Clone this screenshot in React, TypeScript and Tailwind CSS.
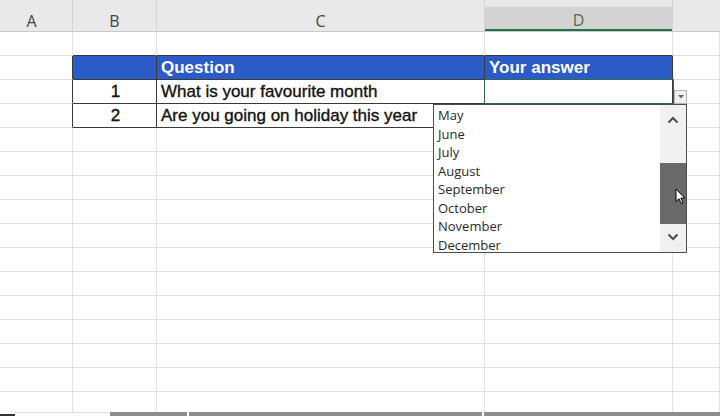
import React from 'react'

const COLS = [
  { key: 'A', w: 'w-[73px]' },
  { key: 'B', w: 'w-[84px]' },
  { key: 'C', w: 'w-[328px]' },
  { key: 'D', w: 'w-[188px]' },
  { key: 'E', w: 'flex-1' },
]

const MONTHS = ['May', 'June', 'July', 'August', 'September', 'October', 'November', 'December']

const ROW_COUNT = 16

function cellText(row: number, col: number) {
  if (row === 1 && col === 2) return 'Question'
  if (row === 1 && col === 3) return 'Your answer'
  if (row === 2 && col === 1) return '1'
  if (row === 2 && col === 2) return 'What is your favourite month'
  if (row === 3 && col === 1) return '2'
  if (row === 3 && col === 2) return 'Are you going on holiday this year'
  return ''
}

function Cell({ row, col }: { row: number; col: number }) {
  const inTable = col >= 1 && col <= 3
  const darkBottom = inTable && row >= 0 && row <= 3
  const darkRight = col >= 0 && col <= 3 && row >= 1 && row <= 3
  const isHead = row === 1 && inTable
  const text = cellText(row, col)

  return (
    <div
      className={[
        COLS[col].w,
        'h-full shrink-0 border-b border-r flex items-center overflow-hidden whitespace-nowrap text-[17px] pt-[1px]',
        darkBottom ? 'border-b-[#3a3a3a]' : 'border-b-[#e1e1e1]',
        darkRight ? 'border-r-[#3a3a3a]' : 'border-r-[#e1e1e1]',
        isHead ? 'bg-[#2a5bc6] text-white font-bold' : 'bg-white text-[#111] [-webkit-text-stroke:0.35px_#111]',
        col === 1 ? 'justify-center pl-[2px]' : 'justify-start px-[4px]',
      ].join(' ')}
    >
      {text}
    </div>
  )
}

function Chevron({ up }: { up?: boolean }) {
  return (
    <svg width="12" height="8" viewBox="0 0 12 8" className="block">
      <polyline
        points={up ? '1.5,6.5 6,2 10.5,6.5' : '1.5,1.5 6,6 10.5,1.5'}
        fill="none"
        stroke="#4a4a4a"
        strokeWidth="2"
      />
    </svg>
  )
}

export default function App() {
  return (
    <div className="relative w-[720px] h-[418px] overflow-hidden bg-white font-['Liberation_Sans',Arial,sans-serif] select-none">
      {/* column headers */}
      <div className="flex h-[32px] bg-[#e9e9e9] border-b border-[#c9c9c9]">
        {COLS.map((c, i) => (
          <div
            key={c.key}
            className={[
              c.w,
              'shrink-0 h-full flex items-end',
              i < 4 ? 'border-r border-[#d3d3d3]' : '',
            ].join(' ')}
          >
            {c.key !== 'E' && (
              <div
                className={[
                  'w-full h-[24px] flex items-center justify-center pt-[3px] text-[16px] font-["Open_Sans",sans-serif]',
                  c.key === 'A' ? 'pr-[9px]' : '',
                  c.key === 'D' ? 'bg-[#d3d3d3] text-[#4c6b57] border-b-2 border-[#217346]' : 'text-[#444]',
                ].join(' ')}
              >
                {c.key}
              </div>
            )}
          </div>
        ))}
      </div>

      {/* grid body */}
      <div className="flex flex-col h-[380px] overflow-hidden">
        {Array.from({ length: ROW_COUNT }).map((_, r) => (
          <div key={r} className="flex h-[24px] shrink-0">
            {COLS.map((_, c) => (
              <Cell key={c} row={r} col={c} />
            ))}
          </div>
        ))}
      </div>

      {/* bottom sheet bar */}
      <div className="flex h-[6px] items-start">
        <div className="w-[15px] h-[4px] border-b-2 border-[#333]" />
        <div className="w-[95px] h-[4px] bg-white border-t border-[#e1e1e1]" />
        <div className="w-[77px] h-[4px] bg-[#8d8d8d]" />
        <div className="w-[2px] h-[4px] bg-white" />
        <div className="w-[293px] h-[4px] bg-[#8d8d8d]" />
        <div className="w-[2px] h-[4px] bg-white" />
        <div className="flex-1 h-[4px] bg-[#8d8d8d]" />
      </div>

      {/* active cell selection */}
      <div className="absolute left-[484px] top-[79px] w-[190px] h-[25px] border-[1.5px] border-[#2e6b47] pointer-events-none" />

      {/* dropdown button */}
      <div className="absolute left-[674px] top-[90px] w-[13px] h-[14px] bg-[#f0f0f0] border border-[#b5b5b5] flex items-center justify-center">
        <svg width="6" height="4" viewBox="0 0 6 4">
          <polygon points="0,0 6,0 3,3.5" fill="#666" />
        </svg>
      </div>

      {/* validation list */}
      <div className="absolute left-[433px] top-[104px] w-[254px] h-[149px] bg-white border border-[#4d4d4d] flex">
        <div className="flex-1 flex flex-col pl-[4px] pt-[1px] text-[13px] text-[#2a2a2a] font-['Open_Sans',sans-serif]">
          {MONTHS.map((m) => (
            <div key={m} className="h-[18.5px] leading-[18.5px]">
              {m}
            </div>
          ))}
        </div>
        <div className="w-[26px] h-full bg-[#f0f0f0] flex flex-col items-center">
          <div className="h-[30px] flex items-center justify-center">
            <Chevron up />
          </div>
          <div className="h-[28px]" />
          <div className="w-[26px] h-[61px] bg-[#696969]" />
          <div className="flex-1 flex items-center justify-center pb-[2px]">
            <Chevron />
          </div>
        </div>
      </div>

      {/* mouse pointer */}
      <svg className="absolute left-[675px] top-[188px]" width="11" height="17" viewBox="0 0 11 17">
        <path d="M1 1 L1 13.5 L4 10.8 L6.2 15.6 L8 14.8 L5.9 10.1 L9.8 10.1 Z" fill="#fff" stroke="#000" strokeWidth="1" strokeLinejoin="round" />
      </svg>
    </div>
  )
}
